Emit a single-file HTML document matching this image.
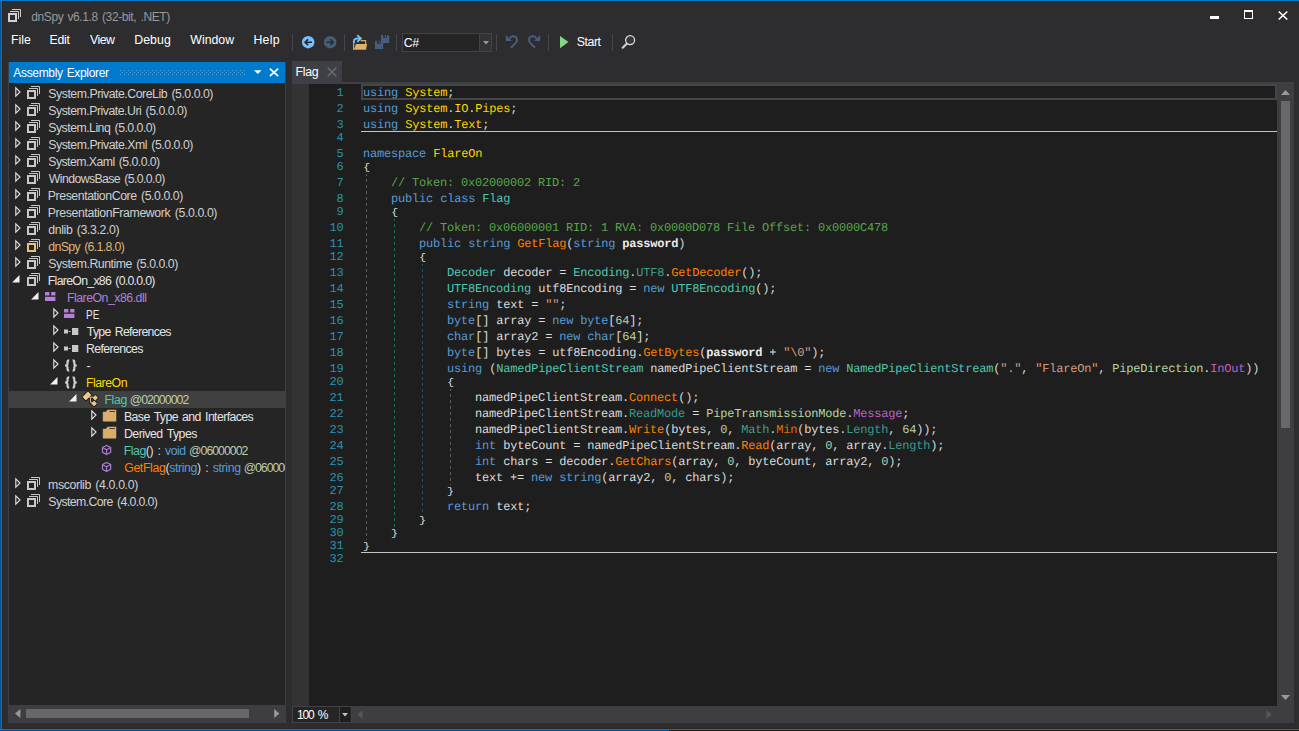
<!DOCTYPE html>
<html><head><meta charset="utf-8"><title>dnSpy</title>
<style>
html,body{margin:0;padding:0}
body{width:1299px;height:731px;background:#2D2D30;position:relative;overflow:hidden;font-family:"Liberation Sans",sans-serif}
.t{position:absolute;white-space:pre;font-family:"Liberation Sans",sans-serif}
.b{position:absolute}
.m{position:absolute;white-space:pre;font-family:"Liberation Mono",monospace;font-size:12px;letter-spacing:-0.201px;line-height:16px;color:#DCDCDC;text-rendering:geometricPrecision}
.m b{font-weight:bold;color:#EDEDED}
svg{position:absolute;overflow:visible}

.K{color:#569CD6}.NS{color:#FFD700}.T{color:#4EC9B0}.ST{color:#3E9E8B}.IP{color:#3A9C8C}
.IM{color:#FF8000}.SM{color:#E07000}.EN{color:#B8D7A3}.EF{color:#BD63C5}.N{color:#B5CEA8}
.S{color:#D69D85}.C{color:#57A64A}.O{color:#DCDCDC}.LN{color:#2B91AF}

</style></head><body>
<div class="b" style="left:0px;top:0px;width:1299px;height:1px;background:#007ACC;"></div>
<div class="b" style="left:0px;top:0px;width:1px;height:731px;background:#00579A;"></div>
<div class="b" style="left:1px;top:0px;width:1px;height:731px;background:#007ACC;"></div>
<div class="b" style="left:2px;top:1px;width:1297px;height:1px;background:#2B2624;"></div>
<div class="b" style="left:2px;top:1px;width:1px;height:728px;background:#2B2624;"></div>
<div class="b" style="left:2px;top:728px;width:1297px;height:1px;background:#2B2624;"></div>
<div class="b" style="left:0px;top:729px;width:1299px;height:1px;background:#007ACC;"></div>
<div class="b" style="left:0px;top:730px;width:669px;height:1px;background:#00509A;"></div>
<div class="b" style="left:669px;top:730px;width:630px;height:1px;background:#1C1814;"></div>
<svg style="left:8px;top:9px" width="14" height="14" viewBox="0 0 14 14" ><path d="M4,0.5 H12.5 V8" fill="none" stroke="#D0D0D0" stroke-width="1"/><path d="M2,2.5 H10.5 V10" fill="none" stroke="#D0D0D0" stroke-width="1"/><rect x="1" y="5" width="7" height="7" fill="#2D2D30" stroke="#D0D0D0" stroke-width="2"/></svg>
<div class="t" style="left:31.20px;top:11.24px;font-size:12px;line-height:13.788px;color:#999999;letter-spacing:-0.383px;word-spacing:1.2px;">dnSpy v6.1.8 (32-bit, .NET)</div>
<div class="b" style="left:1210px;top:16px;width:9px;height:3px;background:#FFFFFF;"></div>
<div class="b" style="left:1244px;top:10px;width:7px;height:6px;border:1px solid #fff;border-top:2px solid #fff"></div>
<svg style="left:1278px;top:11px" width="10" height="9" viewBox="0 0 10 9" ><path d="M0.7,0.5 L9.3,8.5 M9.3,0.5 L0.7,8.5" stroke="#fff" stroke-width="1.6" fill="none"/></svg>
<div class="t" style="left:11.10px;top:32.67px;font-size:12.3px;line-height:14.133px;color:#FFFFFF;letter-spacing:-0.017px;">File</div>
<div class="t" style="left:49.50px;top:32.67px;font-size:12.3px;line-height:14.133px;color:#FFFFFF;letter-spacing:-0.217px;">Edit</div>
<div class="t" style="left:90.10px;top:32.67px;font-size:12.3px;line-height:14.133px;color:#FFFFFF;letter-spacing:-0.567px;">View</div>
<div class="t" style="left:134.20px;top:32.67px;font-size:12.3px;line-height:14.133px;color:#FFFFFF;letter-spacing:0.075px;">Debug</div>
<div class="t" style="left:190.30px;top:32.67px;font-size:12.3px;line-height:14.133px;color:#FFFFFF;letter-spacing:0.010px;">Window</div>
<div class="t" style="left:253.40px;top:32.67px;font-size:12.3px;line-height:14.133px;color:#FFFFFF;letter-spacing:0.283px;">Help</div>
<div class="b" style="left:292px;top:34px;width:1px;height:17px;background:#46464A;"></div>
<div class="b" style="left:344px;top:34px;width:1px;height:17px;background:#46464A;"></div>
<div class="b" style="left:396px;top:34px;width:1px;height:17px;background:#46464A;"></div>
<div class="b" style="left:496px;top:34px;width:1px;height:17px;background:#46464A;"></div>
<div class="b" style="left:548px;top:34px;width:1px;height:17px;background:#46464A;"></div>
<div class="b" style="left:612px;top:34px;width:1px;height:17px;background:#46464A;"></div>
<svg style="left:301.8px;top:35.8px" width="12.4" height="12.4" viewBox="0 0 12.4 12.4" ><g transform=""><circle cx="6.2" cy="6.2" r="6.2" fill="#75BEFF"/><path d="M10,6.2 H3.6 M6.1,3.3 L3.1,6.2 L6.1,9.1" stroke="#2A2628" stroke-width="1.6" fill="none"/></g></svg>
<svg style="left:323.9px;top:35.8px" width="12.4" height="12.4" viewBox="0 0 12.4 12.4" ><g transform="scale(-1,1) translate(-12.4,0)"><circle cx="6.2" cy="6.2" r="6.2" fill="#465E7B"/><path d="M10,6.2 H3.6 M6.1,3.3 L3.1,6.2 L6.1,9.1" stroke="#2D2D30" stroke-width="1.6" fill="none"/></g></svg>
<svg style="left:352px;top:34px" width="16" height="16" viewBox="0 0 16 16" ><path d="M1.6,9.2 V15.1 H13.6 V6.6 H8.7" fill="none" stroke="#DCA85C" stroke-width="1.15"/><path d="M3.9,10.1 H15.2 L13.9,15.1 H2.3 Z" fill="#DDB06C"/><path d="M2.2,9.3 C1.1,6.4 2.6,4.5 5.2,4.5 H8.2" fill="none" stroke="#75BEFF" stroke-width="1.9"/><path d="M5.2,1.2 L8.9,4.5 L5.2,7.8" fill="none" stroke="#75BEFF" stroke-width="1.8"/></svg>
<svg style="left:375px;top:35px" width="15" height="14" viewBox="0 0 15 14" ><path d="M6,0 H13 L14.2,1.2 V8 H6 Z" fill="#465E7B"/><rect x="8" y="0" width="3.9" height="2.6" fill="#2D2D30"/><rect x="9.9" y="0" width="1.1" height="2" fill="#465E7B"/><path d="M0,5.8 H7 L8.2,7 V14 H0 Z" fill="#465E7B"/><rect x="2" y="5.8" width="3.9" height="2.8" fill="#2D2D30"/><rect x="3.9" y="6" width="1.1" height="2" fill="#465E7B"/></svg>
<div class="b" style="left:402px;top:33px;width:88px;height:17px;border:1px solid #434346;background:#252526"></div>
<div class="b" style="left:479px;top:34px;width:12px;height:17px;background:#333337;"></div>
<div class="b" style="left:479px;top:34px;width:1px;height:17px;background:#434346;"></div>
<svg style="left:483px;top:41px" width="6" height="4" viewBox="0 0 6 4" ><path d="M0,0 H6 L3,3.5 Z" fill="#999999"/></svg>
<div class="t" style="left:403.80px;top:35.77px;font-size:12.3px;line-height:14.133px;color:#FFFFFF;letter-spacing:-0.350px;">C#</div>
<svg style="left:505px;top:34px" width="14" height="16" viewBox="0 0 14 16" ><g transform=""><path d="M4.6,4.6 C6,2.1 9,1.6 10.8,3.1 C12.8,4.9 12.3,7.3 10.5,9.1 L5.9,13.7" fill="none" stroke="#465E7B" stroke-width="2"/><path d="M0.9,1 V7 H6.9 Z" fill="#465E7B"/></g></svg>
<svg style="left:526.8px;top:34px" width="14" height="16" viewBox="0 0 14 16" ><g transform="scale(-1,1) translate(-14,0)"><path d="M4.6,4.6 C6,2.1 9,1.6 10.8,3.1 C12.8,4.9 12.3,7.3 10.5,9.1 L5.9,13.7" fill="none" stroke="#465E7B" stroke-width="2"/><path d="M0.9,1 V7 H6.9 Z" fill="#465E7B"/></g></svg>
<svg style="left:559.8px;top:36px" width="9" height="12.2" viewBox="0 0 9 12.2" ><path d="M0,0 L8.5,6.1 L0,12.2 Z" fill="#86D586"/></svg>
<div class="t" style="left:576.80px;top:34.87px;font-size:12.3px;line-height:14.133px;color:#FFFFFF;letter-spacing:-0.450px;">Start</div>
<svg style="left:621px;top:34px" width="15" height="15" viewBox="0 0 15 15" ><circle cx="9.1" cy="6.1" r="4.5" fill="#38383C" stroke="#D8D8D8" stroke-width="1.3"/><path d="M5.7,9.7 L1.7,13.7" stroke="#D0D0D0" stroke-width="2.2" stroke-linecap="round"/></svg>
<div class="b" style="left:8px;top:62px;width:278px;height:661px;background:#3F3F46;"></div>
<div class="b" style="left:9px;top:62px;width:276px;height:660px;background:#252526;"></div>
<div class="b" style="left:9px;top:62px;width:276px;height:21px;background:#007ACC;"></div>
<div class="t" style="left:13.30px;top:67.14px;font-size:12px;line-height:13.788px;color:#FFFFFF;letter-spacing:-0.331px;word-spacing:1px;">Assembly Explorer</div>
<svg style="left:120px;top:70px" width="126" height="5" viewBox="0 0 126 5" ><rect x="0" y="0" width="1" height="1" fill="#59A8DE"/><rect x="4" y="0" width="1" height="1" fill="#59A8DE"/><rect x="8" y="0" width="1" height="1" fill="#59A8DE"/><rect x="12" y="0" width="1" height="1" fill="#59A8DE"/><rect x="16" y="0" width="1" height="1" fill="#59A8DE"/><rect x="20" y="0" width="1" height="1" fill="#59A8DE"/><rect x="24" y="0" width="1" height="1" fill="#59A8DE"/><rect x="28" y="0" width="1" height="1" fill="#59A8DE"/><rect x="32" y="0" width="1" height="1" fill="#59A8DE"/><rect x="36" y="0" width="1" height="1" fill="#59A8DE"/><rect x="40" y="0" width="1" height="1" fill="#59A8DE"/><rect x="44" y="0" width="1" height="1" fill="#59A8DE"/><rect x="48" y="0" width="1" height="1" fill="#59A8DE"/><rect x="52" y="0" width="1" height="1" fill="#59A8DE"/><rect x="56" y="0" width="1" height="1" fill="#59A8DE"/><rect x="60" y="0" width="1" height="1" fill="#59A8DE"/><rect x="64" y="0" width="1" height="1" fill="#59A8DE"/><rect x="68" y="0" width="1" height="1" fill="#59A8DE"/><rect x="72" y="0" width="1" height="1" fill="#59A8DE"/><rect x="76" y="0" width="1" height="1" fill="#59A8DE"/><rect x="80" y="0" width="1" height="1" fill="#59A8DE"/><rect x="84" y="0" width="1" height="1" fill="#59A8DE"/><rect x="88" y="0" width="1" height="1" fill="#59A8DE"/><rect x="92" y="0" width="1" height="1" fill="#59A8DE"/><rect x="96" y="0" width="1" height="1" fill="#59A8DE"/><rect x="100" y="0" width="1" height="1" fill="#59A8DE"/><rect x="104" y="0" width="1" height="1" fill="#59A8DE"/><rect x="108" y="0" width="1" height="1" fill="#59A8DE"/><rect x="112" y="0" width="1" height="1" fill="#59A8DE"/><rect x="116" y="0" width="1" height="1" fill="#59A8DE"/><rect x="120" y="0" width="1" height="1" fill="#59A8DE"/><rect x="124" y="0" width="1" height="1" fill="#59A8DE"/><rect x="2" y="2" width="1" height="1" fill="#59A8DE"/><rect x="6" y="2" width="1" height="1" fill="#59A8DE"/><rect x="10" y="2" width="1" height="1" fill="#59A8DE"/><rect x="14" y="2" width="1" height="1" fill="#59A8DE"/><rect x="18" y="2" width="1" height="1" fill="#59A8DE"/><rect x="22" y="2" width="1" height="1" fill="#59A8DE"/><rect x="26" y="2" width="1" height="1" fill="#59A8DE"/><rect x="30" y="2" width="1" height="1" fill="#59A8DE"/><rect x="34" y="2" width="1" height="1" fill="#59A8DE"/><rect x="38" y="2" width="1" height="1" fill="#59A8DE"/><rect x="42" y="2" width="1" height="1" fill="#59A8DE"/><rect x="46" y="2" width="1" height="1" fill="#59A8DE"/><rect x="50" y="2" width="1" height="1" fill="#59A8DE"/><rect x="54" y="2" width="1" height="1" fill="#59A8DE"/><rect x="58" y="2" width="1" height="1" fill="#59A8DE"/><rect x="62" y="2" width="1" height="1" fill="#59A8DE"/><rect x="66" y="2" width="1" height="1" fill="#59A8DE"/><rect x="70" y="2" width="1" height="1" fill="#59A8DE"/><rect x="74" y="2" width="1" height="1" fill="#59A8DE"/><rect x="78" y="2" width="1" height="1" fill="#59A8DE"/><rect x="82" y="2" width="1" height="1" fill="#59A8DE"/><rect x="86" y="2" width="1" height="1" fill="#59A8DE"/><rect x="90" y="2" width="1" height="1" fill="#59A8DE"/><rect x="94" y="2" width="1" height="1" fill="#59A8DE"/><rect x="98" y="2" width="1" height="1" fill="#59A8DE"/><rect x="102" y="2" width="1" height="1" fill="#59A8DE"/><rect x="106" y="2" width="1" height="1" fill="#59A8DE"/><rect x="110" y="2" width="1" height="1" fill="#59A8DE"/><rect x="114" y="2" width="1" height="1" fill="#59A8DE"/><rect x="118" y="2" width="1" height="1" fill="#59A8DE"/><rect x="122" y="2" width="1" height="1" fill="#59A8DE"/><rect x="0" y="4" width="1" height="1" fill="#59A8DE"/><rect x="4" y="4" width="1" height="1" fill="#59A8DE"/><rect x="8" y="4" width="1" height="1" fill="#59A8DE"/><rect x="12" y="4" width="1" height="1" fill="#59A8DE"/><rect x="16" y="4" width="1" height="1" fill="#59A8DE"/><rect x="20" y="4" width="1" height="1" fill="#59A8DE"/><rect x="24" y="4" width="1" height="1" fill="#59A8DE"/><rect x="28" y="4" width="1" height="1" fill="#59A8DE"/><rect x="32" y="4" width="1" height="1" fill="#59A8DE"/><rect x="36" y="4" width="1" height="1" fill="#59A8DE"/><rect x="40" y="4" width="1" height="1" fill="#59A8DE"/><rect x="44" y="4" width="1" height="1" fill="#59A8DE"/><rect x="48" y="4" width="1" height="1" fill="#59A8DE"/><rect x="52" y="4" width="1" height="1" fill="#59A8DE"/><rect x="56" y="4" width="1" height="1" fill="#59A8DE"/><rect x="60" y="4" width="1" height="1" fill="#59A8DE"/><rect x="64" y="4" width="1" height="1" fill="#59A8DE"/><rect x="68" y="4" width="1" height="1" fill="#59A8DE"/><rect x="72" y="4" width="1" height="1" fill="#59A8DE"/><rect x="76" y="4" width="1" height="1" fill="#59A8DE"/><rect x="80" y="4" width="1" height="1" fill="#59A8DE"/><rect x="84" y="4" width="1" height="1" fill="#59A8DE"/><rect x="88" y="4" width="1" height="1" fill="#59A8DE"/><rect x="92" y="4" width="1" height="1" fill="#59A8DE"/><rect x="96" y="4" width="1" height="1" fill="#59A8DE"/><rect x="100" y="4" width="1" height="1" fill="#59A8DE"/><rect x="104" y="4" width="1" height="1" fill="#59A8DE"/><rect x="108" y="4" width="1" height="1" fill="#59A8DE"/><rect x="112" y="4" width="1" height="1" fill="#59A8DE"/><rect x="116" y="4" width="1" height="1" fill="#59A8DE"/><rect x="120" y="4" width="1" height="1" fill="#59A8DE"/><rect x="124" y="4" width="1" height="1" fill="#59A8DE"/></svg>
<svg style="left:254px;top:70px" width="8" height="5" viewBox="0 0 8 5" ><path d="M0,0.2 H7.6 L3.8,4 Z" fill="#fff"/></svg>
<svg style="left:269px;top:68px" width="10" height="9" viewBox="0 0 10 9" ><path d="M0.8,0.6 L9.2,8.2 M9.2,0.6 L0.8,8.2" stroke="#fff" stroke-width="1.7" fill="none"/></svg>
<div class="b" style="left:9px;top:83px;width:276px;height:622px;overflow:hidden">
<div style="position:absolute;left:-9px;top:-83px;width:1299px;height:731px"><svg style="left:14.5px;top:87px" width="6" height="10" viewBox="0 0 6 10" ><path d="M0.8,0.9 L5,5 L0.8,9.1 Z" fill="none" stroke="#E0E0E0" stroke-width="1.15"/></svg>
<svg style="left:27px;top:86px" width="14" height="14" viewBox="0 0 14 14" ><path d="M4,0.5 H12.5 V8" fill="none" stroke="#C8C8C8" stroke-width="1"/><path d="M2,2.5 H10.5 V10" fill="none" stroke="#C8C8C8" stroke-width="1"/><rect x="1" y="5" width="7" height="7" fill="#252526" stroke="#C8C8C8" stroke-width="2"/></svg>
<div class="t" style="left:48.30px;top:86.67px;font-size:12.3px;line-height:14px;letter-spacing:-0.473px;word-spacing:1.4px"><span style="color:#D0D0D0">System.Private.CoreLib (5.0.0.0)</span></div>
<svg style="left:14.5px;top:104px" width="6" height="10" viewBox="0 0 6 10" ><path d="M0.8,0.9 L5,5 L0.8,9.1 Z" fill="none" stroke="#E0E0E0" stroke-width="1.15"/></svg>
<svg style="left:27px;top:103px" width="14" height="14" viewBox="0 0 14 14" ><path d="M4,0.5 H12.5 V8" fill="none" stroke="#C8C8C8" stroke-width="1"/><path d="M2,2.5 H10.5 V10" fill="none" stroke="#C8C8C8" stroke-width="1"/><rect x="1" y="5" width="7" height="7" fill="#252526" stroke="#C8C8C8" stroke-width="2"/></svg>
<div class="t" style="left:48.30px;top:103.67px;font-size:12.3px;line-height:14px;letter-spacing:-0.494px;word-spacing:1.4px"><span style="color:#D0D0D0">System.Private.Uri (5.0.0.0)</span></div>
<svg style="left:14.5px;top:121px" width="6" height="10" viewBox="0 0 6 10" ><path d="M0.8,0.9 L5,5 L0.8,9.1 Z" fill="none" stroke="#E0E0E0" stroke-width="1.15"/></svg>
<svg style="left:27px;top:120px" width="14" height="14" viewBox="0 0 14 14" ><path d="M4,0.5 H12.5 V8" fill="none" stroke="#C8C8C8" stroke-width="1"/><path d="M2,2.5 H10.5 V10" fill="none" stroke="#C8C8C8" stroke-width="1"/><rect x="1" y="5" width="7" height="7" fill="#252526" stroke="#C8C8C8" stroke-width="2"/></svg>
<div class="t" style="left:48.30px;top:120.67px;font-size:12.3px;line-height:14px;letter-spacing:-0.518px;word-spacing:1.4px"><span style="color:#D0D0D0">System.Linq (5.0.0.0)</span></div>
<svg style="left:14.5px;top:138px" width="6" height="10" viewBox="0 0 6 10" ><path d="M0.8,0.9 L5,5 L0.8,9.1 Z" fill="none" stroke="#E0E0E0" stroke-width="1.15"/></svg>
<svg style="left:27px;top:137px" width="14" height="14" viewBox="0 0 14 14" ><path d="M4,0.5 H12.5 V8" fill="none" stroke="#C8C8C8" stroke-width="1"/><path d="M2,2.5 H10.5 V10" fill="none" stroke="#C8C8C8" stroke-width="1"/><rect x="1" y="5" width="7" height="7" fill="#252526" stroke="#C8C8C8" stroke-width="2"/></svg>
<div class="t" style="left:48.30px;top:137.67px;font-size:12.3px;line-height:14px;letter-spacing:-0.476px;word-spacing:1.4px"><span style="color:#D0D0D0">System.Private.Xml (5.0.0.0)</span></div>
<svg style="left:14.5px;top:155px" width="6" height="10" viewBox="0 0 6 10" ><path d="M0.8,0.9 L5,5 L0.8,9.1 Z" fill="none" stroke="#E0E0E0" stroke-width="1.15"/></svg>
<svg style="left:27px;top:154px" width="14" height="14" viewBox="0 0 14 14" ><path d="M4,0.5 H12.5 V8" fill="none" stroke="#C8C8C8" stroke-width="1"/><path d="M2,2.5 H10.5 V10" fill="none" stroke="#C8C8C8" stroke-width="1"/><rect x="1" y="5" width="7" height="7" fill="#252526" stroke="#C8C8C8" stroke-width="2"/></svg>
<div class="t" style="left:48.30px;top:154.67px;font-size:12.3px;line-height:14px;letter-spacing:-0.560px;word-spacing:1.4px"><span style="color:#D0D0D0">System.Xaml (5.0.0.0)</span></div>
<svg style="left:14.5px;top:172px" width="6" height="10" viewBox="0 0 6 10" ><path d="M0.8,0.9 L5,5 L0.8,9.1 Z" fill="none" stroke="#E0E0E0" stroke-width="1.15"/></svg>
<svg style="left:27px;top:171px" width="14" height="14" viewBox="0 0 14 14" ><path d="M4,0.5 H12.5 V8" fill="none" stroke="#C8C8C8" stroke-width="1"/><path d="M2,2.5 H10.5 V10" fill="none" stroke="#C8C8C8" stroke-width="1"/><rect x="1" y="5" width="7" height="7" fill="#252526" stroke="#C8C8C8" stroke-width="2"/></svg>
<div class="t" style="left:48.80px;top:171.67px;font-size:12.3px;line-height:14px;letter-spacing:-0.605px;word-spacing:1.4px"><span style="color:#D0D0D0">WindowsBase (5.0.0.0)</span></div>
<svg style="left:14.5px;top:189px" width="6" height="10" viewBox="0 0 6 10" ><path d="M0.8,0.9 L5,5 L0.8,9.1 Z" fill="none" stroke="#E0E0E0" stroke-width="1.15"/></svg>
<svg style="left:27px;top:188px" width="14" height="14" viewBox="0 0 14 14" ><path d="M4,0.5 H12.5 V8" fill="none" stroke="#C8C8C8" stroke-width="1"/><path d="M2,2.5 H10.5 V10" fill="none" stroke="#C8C8C8" stroke-width="1"/><rect x="1" y="5" width="7" height="7" fill="#252526" stroke="#C8C8C8" stroke-width="2"/></svg>
<div class="t" style="left:47.80px;top:188.67px;font-size:12.3px;line-height:14px;letter-spacing:-0.430px;word-spacing:1.4px"><span style="color:#D0D0D0">PresentationCore (5.0.0.0)</span></div>
<svg style="left:14.5px;top:206px" width="6" height="10" viewBox="0 0 6 10" ><path d="M0.8,0.9 L5,5 L0.8,9.1 Z" fill="none" stroke="#E0E0E0" stroke-width="1.15"/></svg>
<svg style="left:27px;top:205px" width="14" height="14" viewBox="0 0 14 14" ><path d="M4,0.5 H12.5 V8" fill="none" stroke="#C8C8C8" stroke-width="1"/><path d="M2,2.5 H10.5 V10" fill="none" stroke="#C8C8C8" stroke-width="1"/><rect x="1" y="5" width="7" height="7" fill="#252526" stroke="#C8C8C8" stroke-width="2"/></svg>
<div class="t" style="left:47.80px;top:205.67px;font-size:12.3px;line-height:14px;letter-spacing:-0.383px;word-spacing:1.4px"><span style="color:#D0D0D0">PresentationFramework (5.0.0.0)</span></div>
<svg style="left:14.5px;top:223px" width="6" height="10" viewBox="0 0 6 10" ><path d="M0.8,0.9 L5,5 L0.8,9.1 Z" fill="none" stroke="#E0E0E0" stroke-width="1.15"/></svg>
<svg style="left:27px;top:222px" width="14" height="14" viewBox="0 0 14 14" ><path d="M4,0.5 H12.5 V8" fill="none" stroke="#C8C8C8" stroke-width="1"/><path d="M2,2.5 H10.5 V10" fill="none" stroke="#C8C8C8" stroke-width="1"/><rect x="1" y="5" width="7" height="7" fill="#252526" stroke="#C8C8C8" stroke-width="2"/></svg>
<div class="t" style="left:48.30px;top:222.67px;font-size:12.3px;line-height:14px;letter-spacing:-0.379px;word-spacing:1.4px"><span style="color:#D0D0D0">dnlib (3.3.2.0)</span></div>
<svg style="left:14.5px;top:240px" width="6" height="10" viewBox="0 0 6 10" ><path d="M0.8,0.9 L5,5 L0.8,9.1 Z" fill="none" stroke="#E0E0E0" stroke-width="1.15"/></svg>
<svg style="left:27px;top:239px" width="14" height="14" viewBox="0 0 14 14" ><path d="M4,0.5 H12.5 V8" fill="none" stroke="#EBBF82" stroke-width="1"/><path d="M2,2.5 H10.5 V10" fill="none" stroke="#EBBF82" stroke-width="1"/><rect x="1" y="5" width="7" height="7" fill="#252526" stroke="#EBBF82" stroke-width="2"/></svg>
<div class="t" style="left:48.30px;top:239.67px;font-size:12.3px;line-height:14px;letter-spacing:-0.636px;word-spacing:1.4px"><span style="color:#DCB67A">dnSpy (6.1.8.0)</span></div>
<svg style="left:14.5px;top:257px" width="6" height="10" viewBox="0 0 6 10" ><path d="M0.8,0.9 L5,5 L0.8,9.1 Z" fill="none" stroke="#E0E0E0" stroke-width="1.15"/></svg>
<svg style="left:27px;top:256px" width="14" height="14" viewBox="0 0 14 14" ><path d="M4,0.5 H12.5 V8" fill="none" stroke="#C8C8C8" stroke-width="1"/><path d="M2,2.5 H10.5 V10" fill="none" stroke="#C8C8C8" stroke-width="1"/><rect x="1" y="5" width="7" height="7" fill="#252526" stroke="#C8C8C8" stroke-width="2"/></svg>
<div class="t" style="left:48.30px;top:256.67px;font-size:12.3px;line-height:14px;letter-spacing:-0.472px;word-spacing:1.4px"><span style="color:#D0D0D0">System.Runtime (5.0.0.0)</span></div>
<svg style="left:11.5px;top:274.5px" width="8" height="8" viewBox="0 0 8 8" ><path d="M7.5,0.1 V7.6 H0.1 Z" fill="#F0F0F0"/></svg>
<svg style="left:27px;top:273px" width="14" height="14" viewBox="0 0 14 14" ><path d="M4,0.5 H12.5 V8" fill="none" stroke="#C8C8C8" stroke-width="1"/><path d="M2,2.5 H10.5 V10" fill="none" stroke="#C8C8C8" stroke-width="1"/><rect x="1" y="5" width="7" height="7" fill="#252526" stroke="#C8C8C8" stroke-width="2"/></svg>
<div class="t" style="left:47.80px;top:273.67px;font-size:12.3px;line-height:14px;letter-spacing:-0.705px;word-spacing:1.4px"><span style="color:#E4E4E4">FlareOn_x86 (0.0.0.0)</span></div>
<svg style="left:30.5px;top:291.5px" width="8" height="8" viewBox="0 0 8 8" ><path d="M7.5,0.1 V7.6 H0.1 Z" fill="#F0F0F0"/></svg>
<svg style="left:44.7px;top:292px" width="11" height="9" viewBox="0 0 11 9" ><rect x="0" y="0" width="4.4" height="3.5" fill="#B77FDB"/><rect x="6.2" y="0" width="4.2" height="3.5" fill="#B77FDB"/><rect x="0" y="4.8" width="10.4" height="4.2" fill="#B77FDB"/></svg>
<div class="t" style="left:67.00px;top:290.67px;font-size:12.3px;line-height:14px;letter-spacing:-0.493px;word-spacing:1.4px"><span style="color:#B180D7">FlareOn_x86.dll</span></div>
<svg style="left:52.5px;top:308px" width="6" height="10" viewBox="0 0 6 10" ><path d="M0.8,0.9 L5,5 L0.8,9.1 Z" fill="none" stroke="#E0E0E0" stroke-width="1.15"/></svg>
<svg style="left:63.7px;top:309px" width="11" height="9" viewBox="0 0 11 9" ><rect x="0" y="0" width="4.4" height="3.5" fill="#B77FDB"/><rect x="6.2" y="0" width="4.2" height="3.5" fill="#B77FDB"/><rect x="0" y="4.8" width="10.4" height="4.2" fill="#B77FDB"/></svg>
<div class="t" style="left:86.19px;top:307.67px;font-size:12.3px;line-height:14px;transform:scaleX(0.8133);transform-origin:0 0"><span style="color:#E4E4E4">PE</span></div>
<svg style="left:52.5px;top:325px" width="6" height="10" viewBox="0 0 6 10" ><path d="M0.8,0.9 L5,5 L0.8,9.1 Z" fill="none" stroke="#E0E0E0" stroke-width="1.15"/></svg>
<svg style="left:64px;top:327.5px" width="14" height="8" viewBox="0 0 14 8" ><rect x="0" y="1.5" width="4" height="4" fill="#C8C8C8"/><rect x="4.6" y="3" width="2" height="1" fill="#C8C8C8"/><rect x="8" y="0" width="6.3" height="7" fill="#C8C8C8"/></svg>
<div class="t" style="left:86.75px;top:324.67px;font-size:12.3px;line-height:14px;letter-spacing:-0.689px;word-spacing:1.4px"><span style="color:#E4E4E4">Type References</span></div>
<svg style="left:52.5px;top:342px" width="6" height="10" viewBox="0 0 6 10" ><path d="M0.8,0.9 L5,5 L0.8,9.1 Z" fill="none" stroke="#E0E0E0" stroke-width="1.15"/></svg>
<svg style="left:64px;top:344.5px" width="14" height="8" viewBox="0 0 14 8" ><rect x="0" y="1.5" width="4" height="4" fill="#C8C8C8"/><rect x="4.6" y="3" width="2" height="1" fill="#C8C8C8"/><rect x="8" y="0" width="6.3" height="7" fill="#C8C8C8"/></svg>
<div class="t" style="left:86.00px;top:341.67px;font-size:12.3px;line-height:14px;letter-spacing:-0.611px;word-spacing:1.4px"><span style="color:#E4E4E4">References</span></div>
<svg style="left:52.5px;top:359px" width="6" height="10" viewBox="0 0 6 10" ><path d="M0.8,0.9 L5,5 L0.8,9.1 Z" fill="none" stroke="#E0E0E0" stroke-width="1.15"/></svg>
<svg style="left:64px;top:358.5px" width="14" height="14" viewBox="0 0 14 14" ><path d="M5.2,1.4 C3.8,1.4 3.5,1.9 3.5,3.1 V4.9 C3.5,5.9 2.6,6.3 1.2,6.5 C2.6,6.7 3.5,7.1 3.5,8.1 V9.9 C3.5,11.1 3.8,11.6 5.2,11.6" fill="none" stroke="#D0D0D0" stroke-width="2.1"/><path d="M8.6,1.4 C10,1.4 10.3,1.9 10.3,3.1 V4.9 C10.3,5.9 11.2,6.3 12.6,6.5 C11.2,6.7 10.3,7.1 10.3,8.1 V9.9 C10.3,11.1 10,11.6 8.6,11.6" fill="none" stroke="#D0D0D0" stroke-width="2.1"/></svg>
<div class="t" style="left:86.50px;top:358.67px;font-size:12.3px;line-height:14px;letter-spacing:-0.050px;word-spacing:1.4px"><span style="color:#E4E4E4">-</span></div>
<svg style="left:49.5px;top:376.5px" width="8" height="8" viewBox="0 0 8 8" ><path d="M7.5,0.1 V7.6 H0.1 Z" fill="#F0F0F0"/></svg>
<svg style="left:64px;top:375.5px" width="14" height="14" viewBox="0 0 14 14" ><path d="M5.2,1.4 C3.8,1.4 3.5,1.9 3.5,3.1 V4.9 C3.5,5.9 2.6,6.3 1.2,6.5 C2.6,6.7 3.5,7.1 3.5,8.1 V9.9 C3.5,11.1 3.8,11.6 5.2,11.6" fill="none" stroke="#D0D0D0" stroke-width="2.1"/><path d="M8.6,1.4 C10,1.4 10.3,1.9 10.3,3.1 V4.9 C10.3,5.9 11.2,6.3 12.6,6.5 C11.2,6.7 10.3,7.1 10.3,8.1 V9.9 C10.3,11.1 10,11.6 8.6,11.6" fill="none" stroke="#D0D0D0" stroke-width="2.1"/></svg>
<div class="t" style="left:86.00px;top:375.67px;font-size:12.3px;line-height:14px;letter-spacing:-0.492px;word-spacing:1.4px"><span style="color:#FFD700">FlareOn</span></div>
<div class="b" style="left:9px;top:391px;width:276px;height:17px;background:#404041;"></div>
<svg style="left:68.5px;top:393.5px" width="8" height="8" viewBox="0 0 8 8" ><path d="M7.5,0.1 V7.6 H0.1 Z" fill="#F0F0F0"/></svg>
<svg style="left:80px;top:389px" width="20" height="20" viewBox="0 0 20 20" ><path d="M7.9,2.9 L10.9,5.9 L5.9,10.9 L2.9,7.9 Z" fill="#1E1E1E" stroke="#1E1E1E" stroke-width="2.6" stroke-linejoin="round"/><path d="M8.5,8.1 H13 M10.4,8.1 V13.3 H12.4" fill="none" stroke="#1E1E1E" stroke-width="2.8"/><path d="M15.2,6.4 L17.6,8.8 L15.2,11.2 L12.8,8.8 Z" fill="#1E1E1E" stroke="#1E1E1E" stroke-width="2.4" stroke-linejoin="round"/><path d="M14.1,12 L16.6,14.5 L14.1,17 L11.6,14.5 Z" fill="#1E1E1E" stroke="#1E1E1E" stroke-width="2.4" stroke-linejoin="round"/><path d="M7.9,2.9 L10.9,5.9 L5.9,10.9 L2.9,7.9 Z" fill="#EFC68A" stroke="#EFC68A" stroke-width="0.9" stroke-linejoin="round"/><path d="M8.5,8.1 H13 M10.4,8.1 V13.3 H12.4" fill="none" stroke="#EFC68A" stroke-width="0.95"/><path d="M15.2,6.4 L17.6,8.8 L15.2,11.2 L12.8,8.8 Z" fill="#EFC68A" stroke="#EFC68A" stroke-width="0.7" stroke-linejoin="round"/><path d="M14.1,12 L16.6,14.5 L14.1,17 L11.6,14.5 Z" fill="#EFC68A" stroke="#EFC68A" stroke-width="0.7" stroke-linejoin="round"/></svg>
<div class="t" style="left:104.40px;top:392.67px;font-size:12.3px;line-height:14px;letter-spacing:-0.350px;word-spacing:1.4px"><span style="color:#4EC9B0">Flag</span></div>
<div class="t" style="left:129.70px;top:392.67px;font-size:12.3px;line-height:14px;letter-spacing:-0.956px;word-spacing:1.4px"><span style="color:#BCCDB0">@02000002</span></div>
<svg style="left:90.5px;top:410px" width="6" height="10" viewBox="0 0 6 10" ><path d="M0.8,0.9 L5,5 L0.8,9.1 Z" fill="none" stroke="#E0E0E0" stroke-width="1.15"/></svg>
<svg style="left:102.8px;top:409.8px" width="14" height="12" viewBox="0 0 14 12" ><path d="M4.4,0 H13 V11.2 H0.1 V2 H3.4 Z" fill="#D9AD6C" stroke="#E5B766" stroke-width="0.5"/><path d="M6.3,1.55 H12.1" stroke="#1c1810" stroke-width="0.9" opacity="0.85"/></svg>
<div class="t" style="left:124.00px;top:409.67px;font-size:12.3px;line-height:14px;letter-spacing:-0.598px;word-spacing:1.4px"><span style="color:#E4E4E4">Base Type and Interfaces</span></div>
<svg style="left:90.5px;top:427px" width="6" height="10" viewBox="0 0 6 10" ><path d="M0.8,0.9 L5,5 L0.8,9.1 Z" fill="none" stroke="#E0E0E0" stroke-width="1.15"/></svg>
<svg style="left:102.8px;top:426.8px" width="14" height="12" viewBox="0 0 14 12" ><path d="M4.4,0 H13 V11.2 H0.1 V2 H3.4 Z" fill="#D9AD6C" stroke="#E5B766" stroke-width="0.5"/><path d="M6.3,1.55 H12.1" stroke="#1c1810" stroke-width="0.9" opacity="0.85"/></svg>
<div class="t" style="left:124.00px;top:426.67px;font-size:12.3px;line-height:14px;letter-spacing:-0.533px;word-spacing:1.4px"><span style="color:#E4E4E4">Derived Types</span></div>
<svg style="left:101.9px;top:445px" width="10" height="10" viewBox="0 0 10 10" ><path d="M4.6,0.4 L8.7,2.5 V7.3 L4.6,9.5 L0.5,7.3 V2.5 Z" fill="none" stroke="#B180D7" stroke-width="1.15" stroke-linejoin="round"/><path d="M0.6,2.6 L4.6,4.8 L8.6,2.6 M4.6,4.8 V9.3" fill="none" stroke="#B180D7" stroke-width="1.05"/></svg>
<div class="t" style="left:123.70px;top:443.67px;font-size:12.3px;line-height:14px;letter-spacing:-0.438px;word-spacing:1.4px"><span style="color:#4EC9B0">Flag</span><span style="color:#DCDCDC">() : </span><span style="color:#569CD6">void</span></div>
<div class="t" style="left:189.00px;top:443.67px;font-size:12.3px;line-height:14px;letter-spacing:-0.969px;word-spacing:1.4px"><span style="color:#BCCDB0">@06000002</span></div>
<svg style="left:101.9px;top:462px" width="10" height="10" viewBox="0 0 10 10" ><path d="M4.6,0.4 L8.7,2.5 V7.3 L4.6,9.5 L0.5,7.3 V2.5 Z" fill="none" stroke="#B180D7" stroke-width="1.15" stroke-linejoin="round"/><path d="M0.6,2.6 L4.6,4.8 L8.6,2.6 M4.6,4.8 V9.3" fill="none" stroke="#B180D7" stroke-width="1.05"/></svg>
<div class="t" style="left:124.20px;top:460.67px;font-size:12.3px;line-height:14px;letter-spacing:-0.361px;word-spacing:1.4px"><span style="color:#FF8000">GetFlag</span><span style="color:#DCDCDC">(</span><span style="color:#569CD6">string</span><span style="color:#DCDCDC">) : </span><span style="color:#569CD6">string</span></div>
<div class="t" style="left:243.70px;top:460.67px;font-size:12.3px;line-height:14px;letter-spacing:-1.070px;word-spacing:1.4px"><span style="color:#BCCDB0">@06000001</span></div>
<svg style="left:14.5px;top:478px" width="6" height="10" viewBox="0 0 6 10" ><path d="M0.8,0.9 L5,5 L0.8,9.1 Z" fill="none" stroke="#E0E0E0" stroke-width="1.15"/></svg>
<svg style="left:27px;top:477px" width="14" height="14" viewBox="0 0 14 14" ><path d="M4,0.5 H12.5 V8" fill="none" stroke="#C8C8C8" stroke-width="1"/><path d="M2,2.5 H10.5 V10" fill="none" stroke="#C8C8C8" stroke-width="1"/><rect x="1" y="5" width="7" height="7" fill="#252526" stroke="#C8C8C8" stroke-width="2"/></svg>
<div class="t" style="left:48.05px;top:477.67px;font-size:12.3px;line-height:14px;letter-spacing:-0.365px;word-spacing:1.4px"><span style="color:#D0D0D0">mscorlib (4.0.0.0)</span></div>
<svg style="left:14.5px;top:495px" width="6" height="10" viewBox="0 0 6 10" ><path d="M0.8,0.9 L5,5 L0.8,9.1 Z" fill="none" stroke="#E0E0E0" stroke-width="1.15"/></svg>
<svg style="left:27px;top:494px" width="14" height="14" viewBox="0 0 14 14" ><path d="M4,0.5 H12.5 V8" fill="none" stroke="#C8C8C8" stroke-width="1"/><path d="M2,2.5 H10.5 V10" fill="none" stroke="#C8C8C8" stroke-width="1"/><rect x="1" y="5" width="7" height="7" fill="#252526" stroke="#C8C8C8" stroke-width="2"/></svg>
<div class="t" style="left:48.30px;top:494.67px;font-size:12.3px;line-height:14px;letter-spacing:-0.605px;word-spacing:1.4px"><span style="color:#D0D0D0">System.Core (4.0.0.0)</span></div></div>
</div>
<div class="b" style="left:9px;top:705px;width:276px;height:17px;background:#3E3E42;"></div>
<div class="b" style="left:26px;top:709px;width:223px;height:9px;background:#686868;"></div>
<svg style="left:14.8px;top:709px" width="6" height="9" viewBox="0 0 6 9" ><path d="M5.4,0 V9 L0,4.5 Z" fill="#999999"/></svg>
<svg style="left:273.8px;top:709px" width="6" height="9" viewBox="0 0 6 9" ><path d="M0.2,0 V9 L5.4,4.5 Z" fill="#999999"/></svg>
<div class="b" style="left:292px;top:61px;width:50px;height:21px;background:#3F3F46;"></div>
<div class="b" style="left:292px;top:82px;width:1002px;height:2px;background:#3F3F46;"></div>
<div class="t" style="left:295.50px;top:64.87px;font-size:12.3px;line-height:14.133px;color:#FFFFFF;letter-spacing:-0.250px;">Flag</div>
<svg style="left:327px;top:67px" width="10" height="10" viewBox="0 0 10 10" ><path d="M0.7,0.7 L9.3,9.3 M9.3,0.7 L0.7,9.3" stroke="#6E6E70" stroke-width="1.3" fill="none"/></svg>
<div class="b" style="left:292px;top:84px;width:17px;height:622px;background:#333334;"></div>
<div class="b" style="left:309px;top:84px;width:968px;height:622px;background:#1E1E1E;"></div>
<div class="b" style="left:1277px;top:84px;width:17px;height:622px;background:#3E3E42;"></div>
<div class="b" style="left:1281px;top:101px;width:9px;height:327px;background:#686868;"></div>
<svg style="left:1281px;top:90px" width="9" height="5" viewBox="0 0 9 5" ><path d="M0,5 H9 L4.5,0 Z" fill="#999999"/></svg>
<svg style="left:1281px;top:695px" width="9" height="5" viewBox="0 0 9 5" ><path d="M0,0 H9 L4.5,5 Z" fill="#999999"/></svg>
<div class="b" style="left:292px;top:706px;width:1002px;height:17px;background:#3E3E42;"></div>
<div class="b" style="left:292px;top:706px;width:58px;height:15px;border:1px solid #434346;background:#252526"></div>
<div class="b" style="left:339px;top:707px;width:1px;height:15px;background:#434346;"></div>
<div class="b" style="left:340px;top:707px;width:10px;height:15px;background:#1E1E1E;"></div>
<svg style="left:342px;top:713px" width="6" height="4" viewBox="0 0 6 4" ><path d="M0,0 H6 L3,3.5 Z" fill="#C0C0C0"/></svg>
<div class="t" style="left:297.05px;top:709.14px;font-size:12px;line-height:13.788px;color:#FFFFFF;letter-spacing:-1.200px;">100</div>
<div class="t" style="left:317.75px;top:709.14px;font-size:12px;line-height:13.788px;color:#FFFFFF;letter-spacing:1.000px;">%</div>
<svg style="left:357px;top:710px" width="6" height="9" viewBox="0 0 6 9" ><path d="M5.6,0 V9 L0.2,4.5 Z" fill="#55555A"/></svg>
<svg style="left:1266px;top:710px" width="6" height="9" viewBox="0 0 6 9" ><path d="M0.4,0 V9 L5.8,4.5 Z" fill="#55555A"/></svg>
<div class="b" style="left:361px;top:84px;width:912px;height:12px;border:2px solid #464646"></div>
<div class="b" style="left:361px;top:131px;width:916px;height:1px;background:#C4C4C4;"></div>
<div class="b" style="left:361px;top:552px;width:916px;height:1px;background:#C4C4C4;"></div>
<div class="m LN" style="left:309px;top:85px;width:34.4px;text-align:right">1</div>
<div class="m" style="left:363.1px;top:85px"><span class="K">using</span> <span class="NS">System</span>;</div>
<div class="m LN" style="left:309px;top:101px;width:34.4px;text-align:right">2</div>
<div class="m" style="left:363.1px;top:101px"><span class="K">using</span> <span class="NS">System</span>.<span class="NS">IO</span>.<span class="NS">Pipes</span>;</div>
<div class="m LN" style="left:309px;top:117px;width:34.4px;text-align:right">3</div>
<div class="m" style="left:363.1px;top:117px"><span class="K">using</span> <span class="NS">System</span>.<span class="NS">Text</span>;</div>
<div class="m LN" style="left:309px;top:130px;width:34.4px;text-align:right">4</div>
<div class="m LN" style="left:309px;top:146px;width:34.4px;text-align:right">5</div>
<div class="m" style="left:363.1px;top:146px"><span class="K">namespace</span> <span class="NS">FlareOn</span></div>
<div class="m LN" style="left:309px;top:159px;width:34.4px;text-align:right">6</div>
<div class="m" style="left:363.1px;top:159px;transform:scaleY(0.8);transform-origin:0 11px">{</div>
<div class="m LN" style="left:309px;top:175px;width:34.4px;text-align:right">7</div>
<div class="m" style="left:363.1px;top:175px">    <span class="C">// Token: 0x02000002 RID: 2</span></div>
<div class="m LN" style="left:309px;top:191px;width:34.4px;text-align:right">8</div>
<div class="m" style="left:363.1px;top:191px">    <span class="K">public</span> <span class="K">class</span> <span class="T">Flag</span></div>
<div class="m LN" style="left:309px;top:204px;width:34.4px;text-align:right">9</div>
<div class="m" style="left:363.1px;top:204px;transform:scaleY(0.8);transform-origin:0 11px">    {</div>
<div class="m LN" style="left:309px;top:220px;width:34.4px;text-align:right">10</div>
<div class="m" style="left:363.1px;top:220px">        <span class="C">// Token: 0x06000001 RID: 1 RVA: 0x0000D078 File Offset: 0x0000C478</span></div>
<div class="m LN" style="left:309px;top:236px;width:34.4px;text-align:right">11</div>
<div class="m" style="left:363.1px;top:236px">        <span class="K">public</span> <span class="K">string</span> <span class="IM">GetFlag</span>(<span class="K">string</span> <b>password</b>)</div>
<div class="m LN" style="left:309px;top:249px;width:34.4px;text-align:right">12</div>
<div class="m" style="left:363.1px;top:249px;transform:scaleY(0.8);transform-origin:0 11px">        {</div>
<div class="m LN" style="left:309px;top:265px;width:34.4px;text-align:right">13</div>
<div class="m" style="left:363.1px;top:265px">            <span class="T">Decoder</span> decoder = <span class="T">Encoding</span>.<span class="ST">UTF8</span>.<span class="IM">GetDecoder</span>();</div>
<div class="m LN" style="left:309px;top:281px;width:34.4px;text-align:right">14</div>
<div class="m" style="left:363.1px;top:281px">            <span class="T">UTF8Encoding</span> utf8Encoding = <span class="K">new</span> <span class="T">UTF8Encoding</span>();</div>
<div class="m LN" style="left:309px;top:297px;width:34.4px;text-align:right">15</div>
<div class="m" style="left:363.1px;top:297px">            <span class="K">string</span> text = <span class="S">&quot;&quot;</span>;</div>
<div class="m LN" style="left:309px;top:313px;width:34.4px;text-align:right">16</div>
<div class="m" style="left:363.1px;top:313px">            <span class="K">byte</span>[] array = <span class="K">new</span> <span class="K">byte</span>[<span class="N">64</span>];</div>
<div class="m LN" style="left:309px;top:329px;width:34.4px;text-align:right">17</div>
<div class="m" style="left:363.1px;top:329px">            <span class="K">char</span>[] array2 = <span class="K">new</span> <span class="K">char</span>[<span class="N">64</span>];</div>
<div class="m LN" style="left:309px;top:345px;width:34.4px;text-align:right">18</div>
<div class="m" style="left:363.1px;top:345px">            <span class="K">byte</span>[] bytes = utf8Encoding.<span class="IM">GetBytes</span>(<b>password</b> + <span class="S">&quot;\0&quot;</span>);</div>
<div class="m LN" style="left:309px;top:361px;width:34.4px;text-align:right">19</div>
<div class="m" style="left:363.1px;top:361px">            <span class="K">using</span> (<span class="T">NamedPipeClientStream</span> namedPipeClientStream = <span class="K">new</span> <span class="T">NamedPipeClientStream</span>(<span class="S">&quot;.&quot;</span>, <span class="S">&quot;FlareOn&quot;</span>, <span class="EN">PipeDirection</span>.<span class="EF">InOut</span>))</div>
<div class="m LN" style="left:309px;top:374px;width:34.4px;text-align:right">20</div>
<div class="m" style="left:363.1px;top:374px;transform:scaleY(0.8);transform-origin:0 11px">            {</div>
<div class="m LN" style="left:309px;top:390px;width:34.4px;text-align:right">21</div>
<div class="m" style="left:363.1px;top:390px">                namedPipeClientStream.<span class="IM">Connect</span>();</div>
<div class="m LN" style="left:309px;top:406px;width:34.4px;text-align:right">22</div>
<div class="m" style="left:363.1px;top:406px">                namedPipeClientStream.<span class="IP">ReadMode</span> = <span class="EN">PipeTransmissionMode</span>.<span class="EF">Message</span>;</div>
<div class="m LN" style="left:309px;top:422px;width:34.4px;text-align:right">23</div>
<div class="m" style="left:363.1px;top:422px">                namedPipeClientStream.<span class="IM">Write</span>(bytes, <span class="N">0</span>, <span class="ST">Math</span>.<span class="SM">Min</span>(bytes.<span class="IP">Length</span>, <span class="N">64</span>));</div>
<div class="m LN" style="left:309px;top:438px;width:34.4px;text-align:right">24</div>
<div class="m" style="left:363.1px;top:438px">                <span class="K">int</span> byteCount = namedPipeClientStream.<span class="IM">Read</span>(array, <span class="N">0</span>, array.<span class="IP">Length</span>);</div>
<div class="m LN" style="left:309px;top:454px;width:34.4px;text-align:right">25</div>
<div class="m" style="left:363.1px;top:454px">                <span class="K">int</span> chars = decoder.<span class="IM">GetChars</span>(array, <span class="N">0</span>, byteCount, array2, <span class="N">0</span>);</div>
<div class="m LN" style="left:309px;top:470px;width:34.4px;text-align:right">26</div>
<div class="m" style="left:363.1px;top:470px">                text += <span class="K">new</span> <span class="K">string</span>(array2, <span class="N">0</span>, chars);</div>
<div class="m LN" style="left:309px;top:483px;width:34.4px;text-align:right">27</div>
<div class="m" style="left:363.1px;top:483px;transform:scaleY(0.8);transform-origin:0 11px">            }</div>
<div class="m LN" style="left:309px;top:499px;width:34.4px;text-align:right">28</div>
<div class="m" style="left:363.1px;top:499px">            <span class="K">return</span> text;</div>
<div class="m LN" style="left:309px;top:512px;width:34.4px;text-align:right">29</div>
<div class="m" style="left:363.1px;top:512px;transform:scaleY(0.8);transform-origin:0 11px">        }</div>
<div class="m LN" style="left:309px;top:525px;width:34.4px;text-align:right">30</div>
<div class="m" style="left:363.1px;top:525px;transform:scaleY(0.8);transform-origin:0 11px">    }</div>
<div class="m LN" style="left:309px;top:538px;width:34.4px;text-align:right">31</div>
<div class="m" style="left:363.1px;top:538px;transform:scaleY(0.8);transform-origin:0 11px">}</div>
<div class="m LN" style="left:309px;top:551px;width:34.4px;text-align:right">32</div>
<div class="b" style="left:366px;top:174px;width:1px;height:366px;background:linear-gradient(to bottom,#5E5E5E 0,#5E5E5E 3px,transparent 3px,transparent 6px);background-size:1px 6px;background-position:0 5px;background-repeat:repeat-y"></div>
<div class="b" style="left:394px;top:219px;width:1px;height:308px;background:linear-gradient(to bottom,#1C6E5E 0,#1C6E5E 3px,transparent 3px,transparent 6px);background-size:1px 6px;background-position:0 5px;background-repeat:repeat-y"></div>
<div class="b" style="left:422px;top:264px;width:1px;height:250px;background:linear-gradient(to bottom,#1E5279 0,#1E5279 3px,transparent 3px,transparent 6px);background-size:1px 6px;background-position:0 5px;background-repeat:repeat-y"></div>
<div class="b" style="left:450px;top:389px;width:1px;height:96px;background:linear-gradient(to bottom,#5E5E5E 0,#5E5E5E 3px,transparent 3px,transparent 6px);background-size:1px 6px;background-position:0 5px;background-repeat:repeat-y"></div>
</body></html>
